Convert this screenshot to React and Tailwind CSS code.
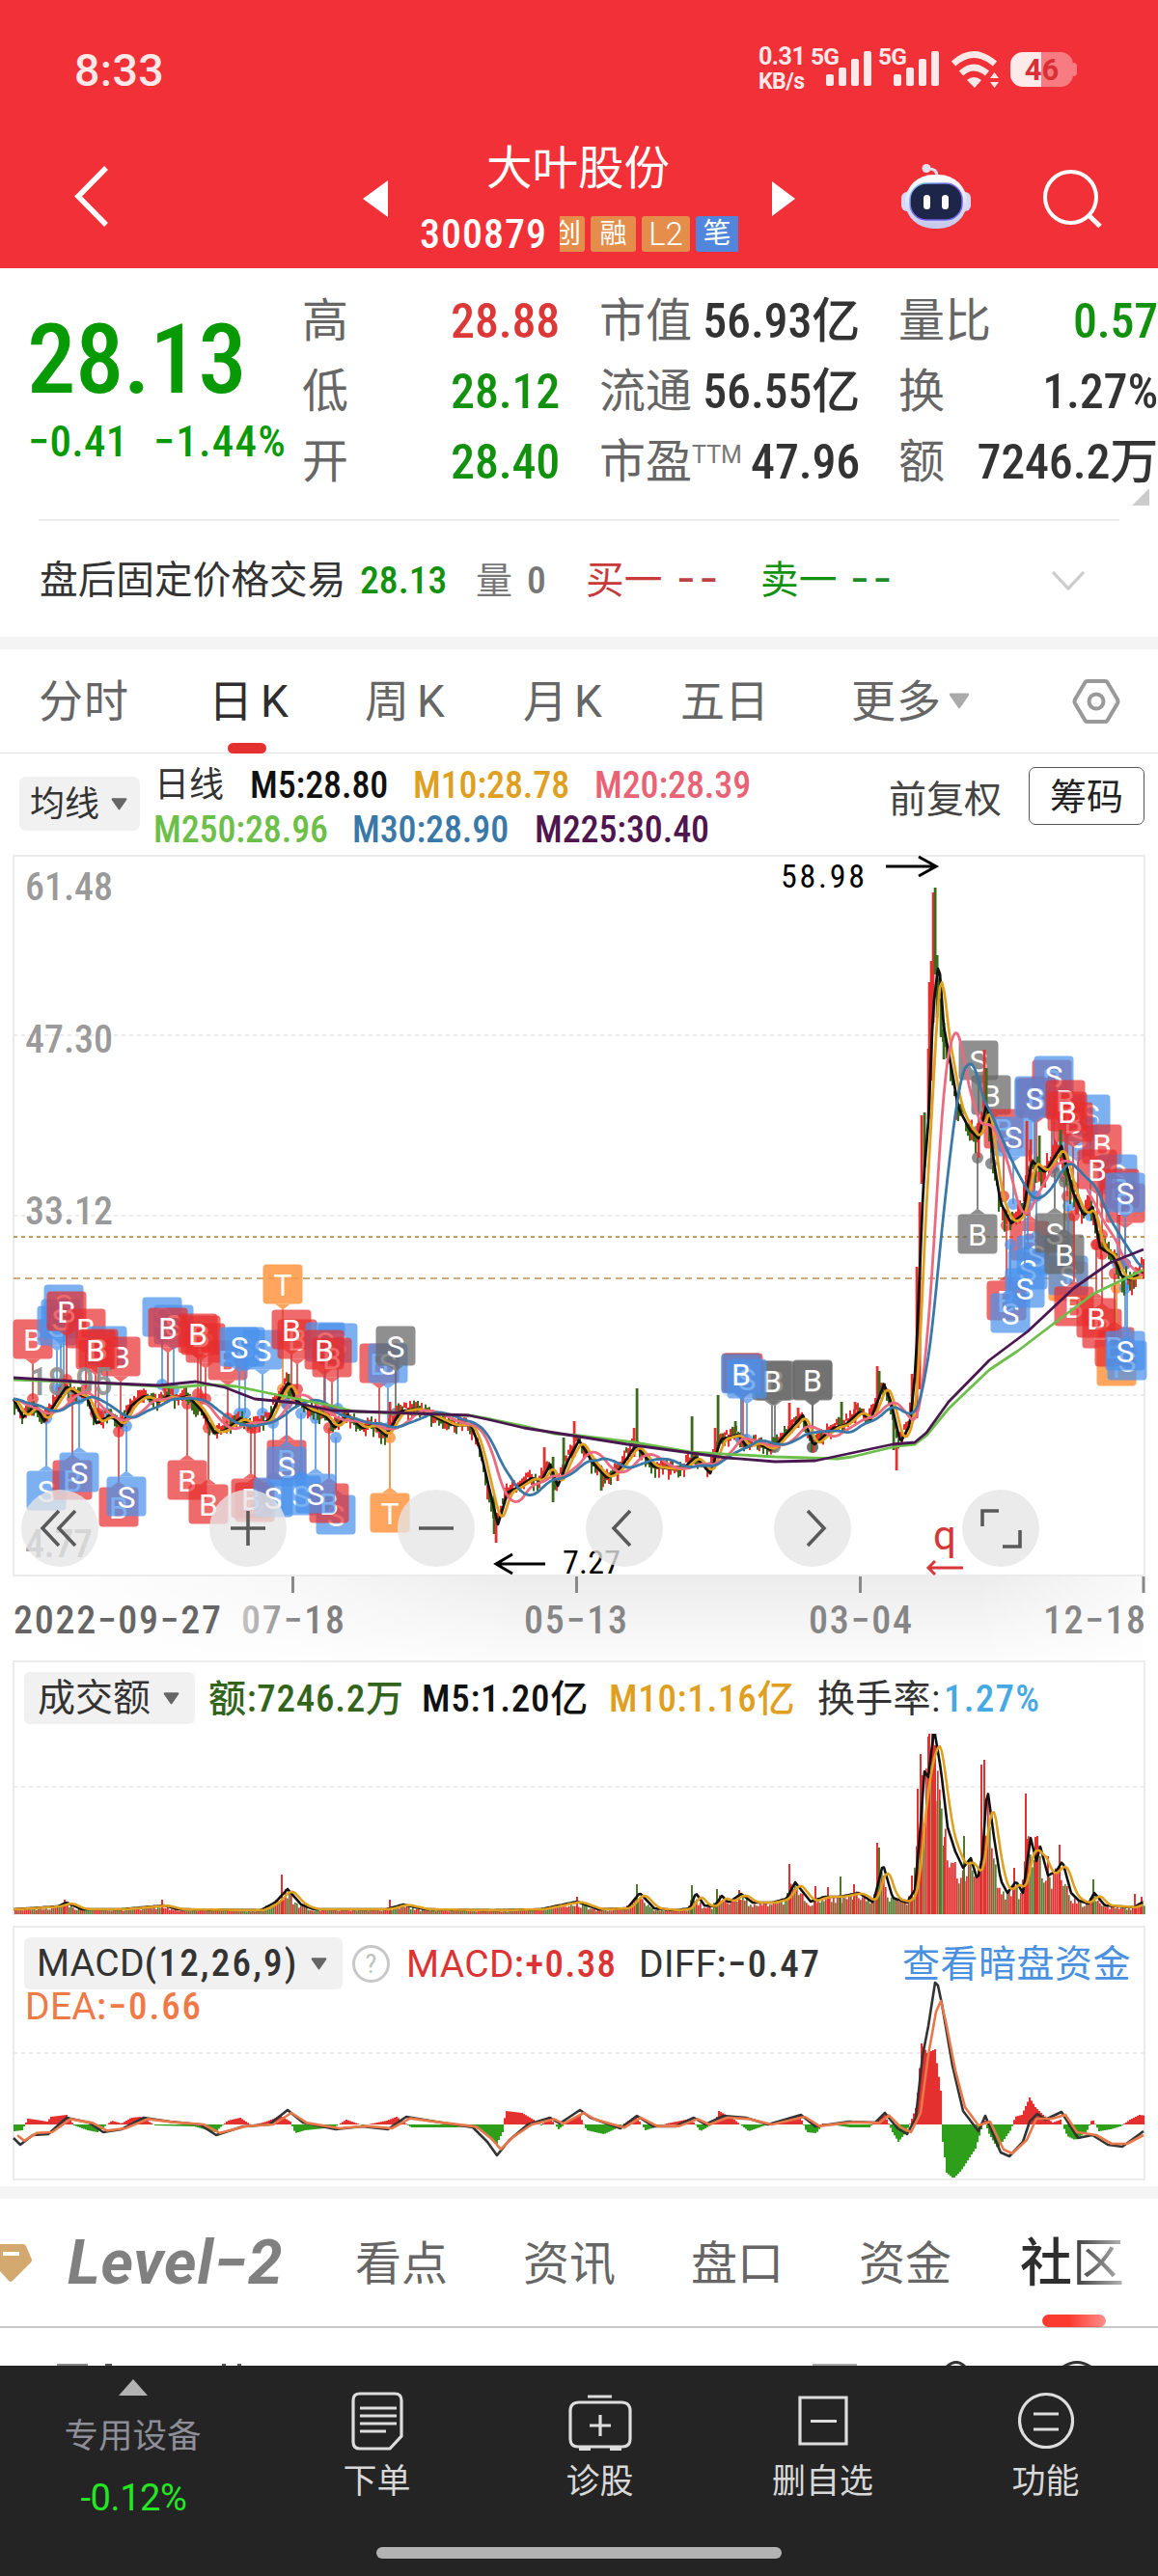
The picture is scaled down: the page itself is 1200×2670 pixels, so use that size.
import React from 'react';

const RED = '#e53030';
const GREEN = '#2f9e1b';

// deterministic noise so the chart is the same on every render
const noise = (i) => {
  const s = Math.sin(i * 127.1 + 11.7) * 43758.5453;
  return s - Math.floor(s);
};

const at = (pts, x) => {
  if (x <= pts[0][0]) return pts[0][1];
  for (let i = 1; i < pts.length; i++) {
    if (x <= pts[i][0]) {
      const [x0, y0] = pts[i - 1];
      const [x1, y1] = pts[i];
      return y0 + ((y1 - y0) * (x - x0)) / (x1 - x0);
    }
  }
  return pts[pts.length - 1][1];
};

const avg = (pts, x, win) => {
  let sum = 0;
  let n = 0;
  for (let d = 0; d <= win; d += 1.5) {
    sum += at(pts, x - d);
    n++;
  }
  return sum / n;
};

const trail = (pts, win) => {
  const out = [];
  for (let x = 14; x <= 1185; x += 2) out.push(x + ',' + avg(pts, x, win).toFixed(1));
  return out.join(' ');
};

const line = (pts) => pts.map((p) => p.join(',')).join(' ');

const price = [
  [14, 1450], [24, 1469], [36, 1457], [46, 1473], [57, 1455], [69, 1437], [80, 1445], [90, 1448], [100, 1475], [115, 1467],
  [126, 1478], [136, 1457], [149, 1447], [165, 1453], [174, 1447], [184, 1450], [195, 1447], [209, 1462], [222, 1485], [233, 1483],
  [249, 1470], [264, 1478], [279, 1472], [287, 1453], [299, 1432], [306, 1450], [318, 1460], [337, 1467], [347, 1480], [360, 1467],
  [375, 1480], [387, 1477], [400, 1488], [406, 1478], [415, 1463], [432, 1460], [448, 1467], [469, 1477], [488, 1477], [497, 1500],
  [507, 1543], [516, 1580], [526, 1547], [536, 1542], [551, 1532], [561, 1535], [570, 1518], [578, 1540], [589, 1513], [600, 1493],
  [615, 1517], [629, 1532], [642, 1523], [659, 1498], [677, 1520], [692, 1522], [707, 1523], [721, 1510], [736, 1527], [747, 1492],
  [765, 1487], [774, 1500], [784, 1495], [799, 1503], [814, 1487], [832, 1467], [843, 1498], [864, 1480], [876, 1477], [891, 1463],
  [902, 1472], [916, 1435], [923, 1452], [933, 1495], [943, 1477], [949, 1416], [957, 1224], [962, 1163], [967, 1045], [973, 996],
  [978, 1064], [987, 1113], [993, 1148], [1005, 1171], [1014, 1180], [1023, 1142], [1030, 1205], [1037, 1247], [1048, 1268], [1060, 1259],
  [1069, 1203], [1083, 1215], [1100, 1188], [1112, 1236], [1123, 1260], [1132, 1251], [1140, 1293], [1153, 1301], [1163, 1324], [1173, 1326], [1185, 1318],
];

const m225 = [
  [14, 1428], [96, 1433], [165, 1436], [203, 1432], [233, 1438], [264, 1450], [306, 1454], [344, 1462], [402, 1464], [486, 1467],
  [509, 1472], [543, 1480], [600, 1489], [650, 1497], [753, 1511], [803, 1515], [845, 1514], [925, 1497], [948, 1495], [960, 1485],
  [983, 1453], [1025, 1410], [1065, 1380], [1113, 1335], [1150, 1309], [1185, 1295],
];

const m250 = [
  [14, 1430], [96, 1433], [165, 1437], [184, 1438], [214, 1435], [245, 1437], [298, 1448], [344, 1457], [367, 1463], [486, 1467],
  [509, 1471], [543, 1478], [574, 1486], [600, 1488], [657, 1495], [715, 1505], [803, 1510], [868, 1512], [883, 1510], [929, 1499],
  [948, 1497], [960, 1488], [983, 1460], [1025, 1420], [1055, 1400], [1097, 1368], [1133, 1341], [1185, 1316],
];

// single long candles: x, top, bottom, colour
const wicks = [
  [564, 1500, 1530, RED], [573, 1510, 1557, '#3b6a1c'], [584, 1490, 1530, '#3b6a1c'], [595, 1473, 1510, RED], [660, 1439, 1500, '#3b6a1c'],
  [657, 1480, 1510, RED], [717, 1468, 1515, '#3b6a1c'], [744, 1446, 1500, '#3b6a1c'], [741, 1480, 1520, RED], [762, 1473, 1490, '#3b6a1c'],
  [818, 1454, 1485, RED], [827, 1459, 1480, RED], [872, 1453, 1480, '#3b6a1c'], [886, 1453, 1475, RED], [909, 1416, 1465, RED],
  [911, 1421, 1450, '#3b6a1c'], [926, 1472, 1503, '#3b6a1c'], [929, 1495, 1524, RED], [945, 1424, 1470, RED], [953, 1246, 1440, RED],
  [950, 1313, 1470, RED], [955, 1156, 1227, RED], [958, 1153, 1210, '#3b6a1c'], [962, 1087, 1160, RED], [963, 1018, 1150, RED],
  [965, 996, 1120, RED], [967, 925, 1060, RED], [969, 920, 1010, '#3b6a1c'], [971, 990, 1055, '#3b6a1c'], [975, 1035, 1075, '#3b6a1c'],
  [978, 1060, 1098, '#3b6a1c'], [1020, 1088, 1160, RED], [1022, 1107, 1150, '#3b6a1c'], [1014, 1170, 1200, RED], [1064, 1162, 1260, RED],
  [1077, 1177, 1215, '#3b6a1c'], [1099, 1171, 1200, '#3b6a1c'], [1068, 1181, 1230, RED], [512, 1550, 1590, '#3b6a1c'], [514, 1570, 1599, RED],
  [623, 1520, 1545, '#3b6a1c'], [640, 1515, 1535, RED], [299, 1424, 1450, '#3b6a1c'], [404, 1453, 1485, RED],
];

const volume = [
  [14, 5], [60, 8], [69, 12], [85, 5], [125, 5], [170, 9], [185, 5], [270, 4], [285, 12], [298, 26], [312, 10], [325, 5], [400, 5],
  [418, 10], [440, 5], [510, 4], [560, 5], [598, 13], [620, 5], [650, 6], [663, 22], [678, 6], [700, 4], [715, 6], [721, 22], [730, 9],
  [740, 8], [748, 19], [755, 12], [768, 21], [780, 12], [800, 12], [815, 16], [824, 33], [840, 13], [855, 18], [870, 18], [890, 22],
  [905, 12], [915, 52], [925, 17], [940, 12], [948, 25], [953, 80], [958, 148], [962, 142], [968, 192], [975, 150], [982, 90], [990, 65],
  [998, 48], [1006, 58], [1013, 35], [1018, 60], [1023, 132], [1030, 80], [1037, 35], [1044, 22], [1053, 34], [1060, 22], [1068, 79],
  [1074, 55], [1078, 70], [1086, 40], [1095, 45], [1101, 55], [1110, 22], [1118, 14], [1128, 11], [1134, 22], [1145, 9], [1160, 8], [1175, 7], [1185, 13],
].map(([x, h]) => [x, 1984 - h]);

const volumeSpikes = [
  [292, 41], [67, 15], [168, 15], [404, 15], [598, 18], [660, 31, 1], [717, 30, 1], [743, 26, 1], [766, 25], [818, 52], [845, 29], [858, 28],
  [871, 39, 1], [885, 31], [909, 74], [911, 69, 1], [945, 40], [951, 130], [954, 166], [962, 184], [963, 190], [967, 193], [969, 175],
  [974, 118, 1], [979, 80], [999, 81, 1], [1017, 155], [1020, 160], [1063, 125], [1065, 78], [1073, 80], [1075, 81], [1086, 60], [1098, 72], [1051, 48],
  [1133, 36, 1], [1176, 21], [1183, 18],
];

const diff = [
  [14, 2216], [21, 2223], [34, 2213], [50, 2212], [69, 2195], [92, 2200], [107, 2210], [126, 2207], [149, 2195], [176, 2199],
  [207, 2202], [224, 2213], [252, 2204], [279, 2202], [298, 2187], [314, 2200], [348, 2207], [375, 2204], [402, 2207], [421, 2194],
  [451, 2199], [490, 2205], [505, 2220], [515, 2234], [528, 2218], [547, 2202], [570, 2195], [580, 2201], [601, 2187], [612, 2195],
  [643, 2206], [660, 2193], [677, 2204], [700, 2204], [719, 2195], [731, 2202], [750, 2193], [773, 2195], [796, 2202], [830, 2192],
  [845, 2204], [880, 2199], [907, 2200], [917, 2190], [930, 2206], [940, 2212], [949, 2195], [956, 2131], [962, 2100], [969, 2055], [972, 2058], [976, 2077],
  [987, 2141], [998, 2188], [1014, 2209], [1021, 2193], [1037, 2231], [1046, 2235], [1060, 2220], [1067, 2199], [1075, 2191], [1083, 2197],
  [1100, 2189], [1117, 2216], [1132, 2213], [1148, 2223], [1163, 2225], [1185, 2209],
];

const dea = [
  ...diff.filter((p) => p[0] < 945).map(([x, y]) => [x + 4, y + (2202 - y) * 0.2]),
  [954, 2190], [962, 2130], [970, 2085], [975, 2074], [980, 2095], [990, 2146], [1000, 2184], [1014, 2203], [1026, 2199], [1040, 2228],
  [1049, 2232], [1064, 2218], [1074, 2196], [1090, 2196], [1104, 2192], [1116, 2210], [1136, 2213], [1152, 2222], [1168, 2222], [1185, 2213],
];

const hist = [
  [14, -7], [22, -6], [28, 6], [36, 5], [48, 3], [52, 8], [68, 10], [76, -1], [90, -6], [100, -8], [115, 4], [125, 1], [135, 7], [145, 8],
  [160, -1], [200, -2], [222, -8], [235, 4], [248, 7], [260, -1], [275, 3], [290, 9], [300, 3], [305, -9], [315, -6], [345, -3], [358, 5],
  [375, -1], [400, 4], [410, 8], [425, -3], [470, -3], [490, -2], [505, -12], [514, -20], [520, -8], [523, 14], [540, 12], [552, 5], [560, -1],
  [568, 8], [578, -5], [590, 5], [600, 9], [607, -6], [625, -10], [640, -3], [658, 9], [668, -6], [690, 1], [715, 6], [725, -7], [740, 2],
  [744, 14], [760, 5], [775, -7], [800, 2], [828, 9], [835, -8], [845, -9], [852, 1], [880, -3], [900, -3], [915, 12], [924, -8], [930, -18],
  [938, -8], [943, 3], [949, 20], [954, 84], [960, 74], [964, 76], [968, 78], [974, 35], [975, -10], [980, -50], [987, -56], [995, -48],
  [1010, -25], [1016, -5], [1019, 8], [1023, -8], [1033, -25], [1047, -5], [1051, 8], [1058, 10], [1066, 28], [1072, 18], [1080, 10],
  [1090, 2], [1098, 5], [1105, -12], [1113, -16], [1125, -8], [1131, 6], [1138, -7], [1150, -5], [1160, -2], [1170, 5], [1180, 10], [1186, 9],
];

const tagColor = { r: 'rgba(232,44,44,.7)', b: 'rgba(74,146,236,.72)', g: 'rgba(104,104,104,.74)', o: 'rgba(255,150,66,.86)' };
const stemColor = { r: '#d23b3b', b: '#4a8fdd', g: '#666', o: '#e08a34' };

// letter, colour, centre x, centre y, y of the candle it belongs to
const tags = [
  ['B', 'r', 34, 1388, 1450], ['S', 'b', 59, 1374, 1440], ['S', 'b', 66, 1352, 1440], ['S', 'b', 63, 1367, 1440], ['B', 'r', 69, 1359, 1430],
  ['B', 'r', 89, 1377, 1440], ['S', 'b', 111, 1395, 1465], ['B', 'r', 125, 1406, 1475], ['B', 'r', 102, 1398, 1465], ['B', 'r', 99, 1399, 1465],
  ['S', 'b', 168, 1365, 1435], ['S', 'b', 180, 1373, 1440], ['B', 'r', 174, 1376, 1440],
  ['B', 'r', 213, 1392, 1450], ['B', 'r', 208, 1384, 1450], ['B', 'r', 205, 1382, 1445], ['B', 'r', 236, 1410, 1470], ['S', 'b', 254, 1396, 1465],
  ['S', 'b', 272, 1399, 1465], ['S', 'b', 248, 1396, 1465],
  ['T', 'o', 293, 1331, 1440], ['B', 'r', 308, 1388, 1440], ['B', 'r', 302, 1378, 1440],
  ['S', 'b', 350, 1392, 1460], ['S', 'b', 337, 1391, 1460], ['B', 'r', 344, 1407, 1462], ['B', 'r', 336, 1399, 1462],
  ['B', 'r', 393, 1413, 1480], ['S', 'b', 402, 1413, 1480], ['S', 'g', 410, 1395, 1465],
  ['B', 'g', 803, 1431, 1500], ['B', 'g', 800, 1431, 1500],
  ['B', 'g', 768, 1423, 1492], ['B', 'r', 770, 1423, 1492], ['S', 'b', 774, 1429, 1492], ['B', 'b', 768, 1424, 1492],
  ['B', 'g', 842, 1431, 1500], ['B', 'g', 842, 1430, 1500],
  ['S', 'b', 48, 1545, 1470], ['B', 'r', 75, 1534, 1450], ['S', 'b', 82, 1526, 1450], ['B', 'r', 123, 1562, 1484], ['S', 'b', 131, 1551, 1478],
  ['B', 'r', 194, 1534, 1455], ['B', 'r', 216, 1559, 1480], ['B', 'r', 264, 1557, 1480], ['B', 'r', 260, 1553, 1480], ['S', 'b', 283, 1552, 1475],
  ['B', 'r', 297, 1513, 1455], ['S', 'b', 297, 1520, 1455], ['S', 'b', 312, 1550, 1465], ['S', 'b', 348, 1570, 1490], ['B', 'r', 341, 1558, 1480], ['S', 'b', 327, 1548, 1470],
  ['T', 'o', 404, 1568, 1490],
  ['S', 'g', 1014, 1099, 1172], ['B', 'g', 1027, 1135, 1206], ['B', 'g', 1013, 1279, 1200],
];

const lateTags = [
  ['B', 'r', 1040, 1170, 1240], ['S', 'b', 1050, 1178, 1248], ['S', 'b', 1072, 1136, 1240], ['B', 'r', 1090, 1119, 1210], ['S', 'b', 1092, 1115, 1210],
  ['B', 'r', 1074, 1138, 1220], ['S', 'b', 1072, 1138, 1240],
  ['S', 'b', 1130, 1155, 1260], ['S', 'b', 1117, 1178, 1250], ['B', 'r', 1142, 1186, 1280], ['B', 'r', 1112, 1163, 1230], ['B', 'r', 1104, 1140, 1220],
  ['B', 'r', 1106, 1152, 1240], ['S', 'b', 1158, 1217, 1310], ['B', 'r', 1160, 1232, 1310], ['B', 'r', 1137, 1212, 1290], ['B', 'r', 1166, 1247, 1310], ['S', 'b', 1166, 1236, 1310],
  ['B', 'r', 1067, 1286, 1230], ['B', 'r', 1043, 1348, 1270], ['S', 'b', 1047, 1361, 1290], ['S', 'b', 1074, 1301, 1240], ['S', 'b', 1065, 1316, 1250],
  ['S', 'b', 1062, 1335, 1255], ['T', 'o', 1107, 1328, 1260], ['S', 'g', 1093, 1278, 1215], ['S', 'b', 1107, 1322, 1250], ['B', 'g', 1103, 1300, 1225],
  ['B', 'r', 1113, 1354, 1260], ['B', 'r', 1142, 1377, 1300], ['B', 'r', 1136, 1366, 1290], ['T', 'o', 1157, 1416, 1335], ['B', 'r', 1155, 1396, 1320],
  ['S', 'b', 1168, 1410, 1330], ['S', 'b', 1166, 1400, 1335],
];

function Tag({ t }) {
  const [letter, c, x, y, ty] = t;
  const down = ty > y;
  const s = down ? 1 : -1;
  return (
    <g>
      <line x1={x} y1={y + s * 26} x2={x} y2={ty} stroke={stemColor[c]} strokeWidth="1.6" />
      <circle cx={x} cy={ty} r="6" fill={tagColor[c]} />
      <path d={`M${x - 8} ${y + s * 20.5}h16l-8 ${s * 6}z`} fill={tagColor[c]} />
      <rect x={x - 20.5} y={y - 20.5} width="41" height="41" rx="4" fill={tagColor[c]} />
      <text x={x} y={y + 11.5} fontSize="32" fill="#fff" textAnchor="middle" className="font-['Roboto']">{letter}</text>
    </g>
  );
}

function Candles() {
  const bars = [];
  for (let x = 14, i = 0; x < 1186; x += 2, i++) {
    const c = at(price, x + 3);
    const up = at(price, x + 4) <= at(price, x + 1);
    const red = noise(i) < (up ? 0.8 : 0.35);
    const amp = x > 975 ? 14 : 8;
    const top = c - 2 - noise(i + 900) * amp;
    const h = 5 + noise(i + 300) * amp * 1.3;
    if (x > 943 && x < 972) continue;
    bars.push(<rect key={x} x={x} y={top} width="2" height={h} fill={red ? RED : '#3b6a1c'} />);
  }
  return (
    <g>
      {bars}
      {wicks.map((w, i) => (
        <rect key={i} x={w[0] - 1.3} y={w[1]} width="2.8" height={w[2] - w[1]} fill={w[3]} />
      ))}
    </g>
  );
}

const controls = [
  [62, 'M61 1566l-17 18 17 18M78 1566l-17 18 17 18'],
  [257, 'M257 1566v36M239 1584h36'],
  [452, 'M434 1584h36'],
  [647, 'M653 1566l-17 18 17 18'],
  [842, 'M837 1566l17 18-17 18'],
  [1037, 'M1018 1582v-16h17M1057 1586v17h-18'],
];

function PriceChart() {
  return (
    <svg className="block h-[837px] w-full" viewBox="0 884 1200 837">
      <defs>
        <linearGradient id="axis" x1="0" x2="0" y1="0" y2="1">
          <stop offset="0" stopColor="#ececec" />
          <stop offset="1" stopColor="#fcfcfc" />
        </linearGradient>
        <linearGradient id="axisFade" x1="0" x2="1" y1="0" y2="0">
          <stop offset="0" stopColor="#fff" />
          <stop offset=".25" stopColor="#fff" stopOpacity=".6" />
          <stop offset=".45" stopColor="#fff" stopOpacity="0" />
          <stop offset=".85" stopColor="#fff" stopOpacity="0" />
          <stop offset="1" stopColor="#fff" stopOpacity=".7" />
        </linearGradient>
        <linearGradient id="dateFade" x1="0" x2="1" y1="0" y2="0">
          <stop offset="0" stopColor="#c4c4c4" />
          <stop offset=".6" stopColor="#808080" />
        </linearGradient>
      </defs>
      <rect x="14" y="1634" width="1172" height="87" fill="url(#axis)" />
      <rect x="14" y="1634" width="1172" height="87" fill="url(#axisFade)" />
      <rect x="14" y="887" width="1172" height="746" fill="none" stroke="#ebebeb" strokeWidth="2" />
      <path d="M14 1073H1186M14 1260H1186M14 1446H1186" stroke="#ebebeb" strokeWidth="2" strokeDasharray="4 4" />
      <path d="M14 1282H1186" stroke="#c09a5c" strokeWidth="2" strokeDasharray="4 4" />
      <path d="M14 1325H1186" stroke="#c8ac7c" strokeWidth="2" strokeDasharray="7 5" />

      {tags.map((t, i) => <Tag key={i} t={t} />)}
      {lateTags.map((t, i) => <Tag key={i} t={t} />)}
      <Candles />
      <g fontSize="40" fill="#8c8c8c" fillOpacity=".9" className="font-medium">
        <text x="26" y="933" textLength="91">61.48</text>
        <text x="26" y="1091" textLength="91">47.30</text>
        <text x="26" y="1269" textLength="91">33.12</text>
        <text x="30" y="1446" textLength="87">18.95</text>
        <text x="26" y="1614" textLength="70">4.77</text>
      </g>
      <g fill="none" strokeWidth="2.8" strokeLinejoin="round">
        <polyline points={trail(price, 1)} stroke="#111" />
        <polyline points={trail(price, 8)} stroke="#e0a020" />
        <polyline points={trail(price, 28)} stroke="#ec6a80" />
        <polyline points={trail(price, 44)} stroke="#3a78a8" />
        <polyline points={line(m250)} stroke="#6cc04a" />
        <polyline points={line(m225)} stroke="#4a1850" />
      </g>

      <text x="809" y="920" fontSize="34" textLength="87">58.98</text>
      <path d="M918 898h50M952 888l18 10-18 10" fill="none" stroke="#000" strokeWidth="3" />
      <path d="M565 1621h-50M531 1611l-17 10 17 10" fill="none" stroke="#000" strokeWidth="3" />
      <text x="583" y="1631" fontSize="34" textLength="60">7.27</text>
      <text x="967" y="1606" fontSize="42" fill="#d63838" className="font-['Roboto']">q</text>
      <path d="M998 1625h-34M969 1618l-7 7 7 7" fill="none" stroke="#d63838" strokeWidth="3" />

      {controls.map(([cx, d]) => (
        <g key={cx}>
          <circle cx={cx} cy="1584" r="40" fill="#e6e6e6" fillOpacity=".78" />
          <path d={d} fill="none" stroke="#5a5a5a" strokeWidth="3.6" />
        </g>
      ))}

      <path d="M303.5 1634v17M597.500 1634v17M891.5 1634v17M1185 1634v17" stroke="#888" strokeWidth="3" />
      <g fontSize="40" fill="#868686" className="font-medium">
        <text x="14" y="1693" fill="#666" textLength="215">2022−09−27</text>
        <text x="250" y="1693" fill="url(#dateFade)" textLength="107">07−18</text>
        <text x="543" y="1693" textLength="107">05−13</text>
        <text x="838" y="1693" textLength="107">03−04</text>
        <text x="1081" y="1693" textLength="106">12−18</text>
      </g>
    </svg>
  );
}

function VolumeChart() {
  const bars = [];
  for (let x = 15, i = 0; x < 1186; x += 2, i++) {
    const h = (1984 - at(volume, x + 3)) * (0.6 + noise(i + 50) * 0.5);
    bars.push(<rect key={x} x={x} y={1984 - h} width="1.7" height={h} fill={noise(i + 7) > 0.42 ? RED : '#5a7f36'} />);
  }
  return (
    <svg className="block h-[188px] w-full" viewBox="0 1797 1200 188">
      <path d="M14 1852H1186" stroke="#ebebeb" strokeWidth="2" strokeDasharray="4 4" />
      <path d="M14 1797V1984H1186V1797" fill="none" stroke="#ebebeb" strokeWidth="2" />
      {bars}
      {volumeSpikes.map(([x, h, g]) => (
        <rect key={x} x={x - 1} y={1984 - h} width="2" height={h} fill={g ? '#4c7a2a' : RED} />
      ))}
      <g fill="none" strokeWidth="2.6" strokeLinejoin="round">
        <polyline points={trail(volume, 1)} stroke="#111" />
        <polyline points={trail(volume, 9)} stroke="#e0a020" />
      </g>
    </svg>
  );
}

function MacdChart() {
  const bars = [];
  for (let x = 14; x < 1186; x += 2) {
    const h = at(hist, x);
    bars.push(<rect key={x} x={x} y={h > 0 ? 2202 - h : 2202} width="2.1" height={Math.abs(h)} fill={h > 0 ? RED : GREEN} />);
  }
  return (
    <svg className="-mt-[46px] block h-[212px] w-full" viewBox="0 2048 1200 212">
      <path d="M14 2128H1186" stroke="#ebebeb" strokeWidth="2" strokeDasharray="4 4" />
      <path d="M14 2048V2259H1186V2048" fill="none" stroke="#ebebeb" strokeWidth="2" />
      {bars}
      <g fill="none" strokeWidth="2.6" strokeLinejoin="round">
        <polyline points={line(diff)} stroke="#333" />
        <polyline points={line(dea)} stroke="#e8784a" />
      </g>
    </svg>
  );
}

function Down({ className }) {
  return (
    <svg className={className} viewBox="0 0 18 13">
      <path d="M2 0h14q2 0 1 2L10 12q-1 1.500-2 0L1 2Q0 0 2 0z" fill="currentColor" />
    </svg>
  );
}

// capitals are set wider than the figures beside them
function Wide({ children }) {
  return <span className="font-['Roboto'] font-normal tracking-[0.3px]">{children}</span>;
}

function Signal({ className }) {
  return (
    <div className={'flex h-[44px] w-[63px] items-start text-[#ffe8e8] ' + className}>
      <span className="w-0 overflow-visible whitespace-nowrap text-[24.5px] leading-[25px] font-bold font-['Roboto'] tracking-[-0.8px]">5G</span>
      <svg className="ml-[16px] h-[44px] w-[47px] shrink-0" viewBox="0 0 47 44" fill="#ffe8e8">
        <rect y="31" width="8" height="12" rx="2" />
        <rect x="13" y="24" width="8" height="19" rx="2" />
        <rect x="26" y="15" width="8" height="28" rx="2" />
        <rect x="39" y="7" width="8" height="36" rx="2" />
      </svg>
    </div>
  );
}

function StatusBar() {
  return (
    <div className="flex h-[142px] items-start pt-[46px] text-[#ffe8e8]">
      <span className="ml-[77px] w-[92px] text-[46.5px] leading-[54px] font-medium font-['Roboto'] tracking-[0.4px]">8:33</span>
      <div className="ml-[617px] w-[54px] whitespace-nowrap text-[25px] leading-[26px] font-bold font-['Roboto'] tracking-[-0.5px]">
        <div>0.31</div>
        <div className="text-[23px]">KB/s</div>
      </div>
      <Signal className="" />
      <Signal className="ml-[7px]" />
      <svg className="mt-[6px] ml-[12px] h-[42px] w-[52px] shrink-0" viewBox="0 0 52 42">
        <g fill="none" stroke="#ffe8e8" strokeWidth="6.500">
          <path d="M3 14Q24-5 46 14" />
          <path d="M11 24Q24 12 38 24" />
        </g>
        <path d="M17 31q7-6 15 0l-7 8z" fill="#ffe8e8" />
        <path d="M41 29l4.500-6 4.500 6zM41 33h9l-4.500 6z" fill="#ffe8e8" />
      </svg>
      <div className="ml-[10px] mt-[8px] flex h-[36px] w-[70px] items-center">
        <div className="flex h-[36px] w-[65px] items-center justify-center rounded-[13px] bg-[linear-gradient(90deg,#ffeaea_50%,#f87b81_50%)] text-[31px] leading-none font-bold text-[#d92f36] font-['Roboto']">46</div>
        <div className="h-[14px] w-[4px] rounded-r-full bg-[#f87b81]" />
      </div>
    </div>
  );
}

function Header() {
  return (
    <header className="h-[278px] bg-[#f23038]">
      <StatusBar />
      <div className="flex h-[136px] text-white">
        <svg className="ml-[77px] mt-[30px] h-[64px] w-[36px]" viewBox="0 0 36 64">
          <path d="M33 2L4 31.500 33 61" fill="none" stroke="#fff" strokeWidth="5.500" />
        </svg>
        <svg className="ml-[263px] mt-[45px] h-[38px] w-[26px]" viewBox="0 0 26 38"><path d="M26 0v38L0 19z" fill="#fff" /></svg>
        <div className="ml-[33px] w-[331px]">
          <div className="mt-[8px] ml-[69px] h-[50px] whitespace-nowrap text-[47.5px] leading-[50px]">大叶股份</div>
          <div className="mt-[24px] flex h-[37px] items-center">
            <span className="w-[145px] text-[42px] leading-none font-medium tracking-[1px]">300879</span>
            <span className="flex h-[37px] w-[26px] items-center justify-end overflow-hidden rounded-r-[3px] bg-[#e58e4c] text-[28px] leading-none"><span className="mr-[4px]">创</span></span>
            <span className="ml-[6px] flex h-[37px] w-[47px] items-center justify-center rounded-[3px] bg-[#e58e4c] text-[28px] leading-none">融</span>
            <span className="ml-[6px] flex h-[37px] w-[50px] items-center justify-center rounded-[3px] bg-[#e58e4c] text-[33px] leading-none font-['Roboto'] font-light">L2</span>
            <span className="ml-[6px] flex h-[37px] w-[44px] items-center justify-center rounded-l-[3px] bg-[#5186dc] text-[29px] leading-none">笔</span>
          </div>
        </div>
        <svg className="ml-[34px] mt-[46px] h-[36px] w-[24px]" viewBox="0 0 24 36"><path d="M0 0v36l24-18z" fill="#fff" /></svg>
        <svg className="ml-[109px] mt-[28px] h-[68px] w-[74px]" viewBox="0 0 74 68">
          <defs>
            <linearGradient id="head" x1="0" x2="0" y1="0" y2="1">
              <stop offset="0" stopColor="#fff" />
              <stop offset="1" stopColor="#c4c6ec" />
            </linearGradient>
            <linearGradient id="rim" x1="0" x2="1" y1="0" y2="1">
              <stop offset="0" stopColor="#7fd4ea" />
              <stop offset=".5" stopColor="#7a5cf0" />
              <stop offset="1" stopColor="#6a6af0" />
            </linearGradient>
          </defs>
          <path d="M28 5q10-1 10 8" fill="none" stroke="#e4def0" strokeWidth="3" />
          <circle cx="27" cy="4.500" r="4.500" fill="#e4e0f2" />
          <rect x="1" y="29" width="14" height="20" rx="6" fill="#d8d8f4" />
          <rect x="59" y="29" width="14" height="20" rx="6" fill="#d8d8f4" />
          <rect x="5" y="11" width="64" height="56" rx="29" fill="url(#head)" />
          <rect x="10" y="20" width="54" height="38" rx="17" fill="#1d2549" stroke="url(#rim)" strokeWidth="1.500" />
          <rect x="24" y="32" width="7" height="15" rx="3.500" fill="#fff" />
          <rect x="43" y="32" width="7" height="15" rx="3.500" fill="#fff" />
        </svg>
        <svg className="ml-[73px] mt-[33px] h-[62px] w-[62px]" viewBox="0 0 62 62" fill="none" stroke="#fff" strokeWidth="4">
          <circle cx="29.500" cy="29.500" r="26.500" />
          <path d="M48 48l12 11.500" strokeWidth="5" />
        </svg>
      </div>
    </header>
  );
}

function Quote({ label, sup, value, color }) {
  return (
    <div className="flex h-[73px] items-center whitespace-nowrap pt-[2px]">
      <span className="text-[48px] leading-none text-[#666]">{label}</span>
      {sup && <span className="mb-[14px] text-[25px] leading-none text-[#777] font-['Roboto']">{sup}</span>}
      <span className={'ml-auto text-[50px] leading-none font-medium tracking-[-0.2px] ' + color}>{value}</span>
    </div>
  );
}

function Summary() {
  return (
    <section>
      <div className="flex h-[262px] border-b-2 border-[#ededed] bg-white [border-image:linear-gradient(90deg,transparent_3.4%,#ededed_3.4%,#ededed_96.6%,transparent_96.6%)_1]">
        <div className="ml-[28px] w-[285px] whitespace-nowrap text-[#079a04]">
          <div className="mt-[45px] text-[101px] leading-[100px] font-medium tracking-[-0.6px]">28.13</div>
          <div className="mt-[10px] ml-px flex text-[45px] leading-[50px] font-medium">
            <span className="w-[130px] tracking-[0.3px]">−0.41</span>
            <span className="tracking-[1.2px]">−1.44%</span>
          </div>
        </div>
        <div className="mt-[17px] w-[267px]">
          <Quote label="高" value="28.88" color="text-[#dc3838]" />
          <Quote label="低" value="28.12" color="text-[#12910f]" />
          <Quote label="开" value="28.40" color="text-[#12910f]" />
        </div>
        <div className="ml-[41px] mt-[17px] w-[270px]">
          <Quote label="市值" value="56.93亿" color="text-[#333]" />
          <Quote label="流通" value="56.55亿" color="text-[#333]" />
          <Quote label="市盈" sup="TTM" value="47.96" color="text-[#333]" />
        </div>
        <div className="ml-[40px] mt-[17px] w-[269px]">
          <Quote label="量比" value="0.57" color="text-[#12910f]" />
          <Quote label="换" value="1.27%" color="text-[#333]" />
          <Quote label="额" value="7246.2万" color="text-[#333]" />
          <svg className="-mt-[8px] ml-[242px] h-[18px] w-[18px]" viewBox="0 0 18 18"><path d="M18 0v18H0z" fill="#ccc" /></svg>
        </div>
      </div>
      <div className="flex h-[120px] items-center whitespace-nowrap pt-[3px] text-[39.7px] leading-none">
        <span className="ml-[41px] w-[332px] text-[#333]">盘后固定价格交易</span>
        <span className="w-[120px] font-medium text-[#12910f]">28.13</span>
        <span className="w-[53px] text-[38px] text-[#777]">量</span>
        <span className="w-[61px] font-medium text-[#777]">0</span>
        <span className="w-[94px] text-[#c83a3a]">买一</span>
        <span className="w-[87px] font-medium tracking-[4px] text-[#b84444]">−−</span>
        <span className="w-[93px] text-[#12910f]">卖一</span>
        <span className="font-medium tracking-[4px] text-[#1f8a28]">−−</span>
        <svg className="ml-auto mr-[76px] h-[20px] w-[34px]" viewBox="0 0 34 20"><path d="M1 1l16 17L33 1" fill="none" stroke="#ccc" strokeWidth="3.200" /></svg>
      </div>
      <div className="h-[13px] bg-[#f4f4f4]" />
    </section>
  );
}

function PeriodTabs() {
  return (
    <nav className="flex h-[108px] border-b border-[#e2e2e2] whitespace-nowrap text-[46px] leading-[108px] text-[#666]">
      <span className="ml-[40px] w-[176px] tracking-[1px]">分时</span>
      <div className="w-[162px] text-[#2e2e2e]">
        <div className="h-[97px]">日<span className="ml-[8px] font-['Roboto']">K</span></div>
        <div className="ml-[20px] h-[11px] w-[40px] rounded-full bg-[#e53030]" />
      </div>
      <span className="w-[164px]">周<span className="ml-[8px] font-['Roboto']">K</span></span>
      <span className="w-[163px]">月<span className="ml-[7px] font-['Roboto']">K</span></span>
      <span className="w-[177px]">五日</span>
      <span className="w-[101px] tracking-[1px]">更多</span>
      <Down className="mt-[44px] h-[19px] w-[22px] text-[#aaa]" />
      <svg className="ml-[106px] mt-[30px] h-[48px] w-[50px]" viewBox="0 0 50 48" fill="none" stroke="#999" strokeWidth="4">
        <path d="M16 3h18q2 0 3 2l10 17q1 2 0 4L37 43q-1 2-3 2H16q-2 0-3-2L3 26q-1-2 0-4L13 5q1-2 3-2z" />
        <circle cx="25" cy="24" r="7.500" />
      </svg>
    </nav>
  );
}

function MaLegend() {
  return (
    <div className="flex h-[103px] whitespace-nowrap">
      <div className="ml-[20px] mt-[24px] flex h-[56px] w-[125px] items-center rounded-[7px] bg-[#f1f1f1] text-[36px] leading-none text-[#333]">
        <span className="ml-[11px] mt-[2px] w-[84px]">均线</span>
        <Down className="h-[13px] w-[17px] text-[#666]" />
      </div>
      <div className="ml-[14px] mt-[10px] w-[762px] text-[38px] leading-[46px] font-medium tracking-[-0.1px]">
        <div className="flex">
          <span className="ml-[1px] w-[99px] text-[36px] font-normal text-[#333]">日线</span>
          <span className="w-[169px] text-[#111]">M5:28.80</span>
          <span className="w-[188px] text-[#dfa021]">M10:28.78</span>
          <span className="text-[#e86375]">M20:28.39</span>
        </div>
        <div className="flex">
          <span className="w-[206px] text-[#6cc04a]">M250:28.96</span>
          <span className="w-[189px] text-[#3a78a8]">M30:28.90</span>
          <span className="text-[#4f154f]">M225:30.40</span>
        </div>
      </div>
      <span className="mt-[19px] w-[145px] text-[39px] leading-[58px] text-[#444]">前复权</span>
      <span className="mt-[14px] h-[60px] w-[120px] rounded-[7px] border border-[#555] text-center text-[38px] leading-[60px] text-[#222]">筹码</span>
    </div>
  );
}

function VolumePanel() {
  return (
    <section>
      <div className="mx-[13px] flex h-[76px] border-x-2 border-t-2 border-[#ebebeb] whitespace-nowrap text-[39px] leading-[76px] font-medium tracking-[0.7px]">
        <div className="ml-[10px] mt-[10px] flex h-[54px] w-[177px] items-center rounded-[6px] bg-[#f1f1f1] leading-none font-normal tracking-normal text-[#333]">
          <span className="ml-[14px] mt-px w-[130px]">成交额</span>
          <Down className="h-[13px] w-[17px] text-[#666]" />
        </div>
        <span className="ml-[14px] w-[221px] text-[#33641b]">额:7246.2万</span>
        <span className="w-[194px] text-[#111]">M5:1.20亿</span>
        <span className="w-[216px] text-[#dfa021]">M10:1.16亿</span>
        <span className="w-[131px] font-normal tracking-[0.3px] text-[#333]">换手率:</span>
        <span className="tracking-[1.2px] text-[#46a9e4]">1.27%</span>
      </div>
      <VolumeChart />
    </section>
  );
}

function MacdPanel() {
  return (
    <section className="mt-[11px]">
      <div className="mx-[13px] h-[98px] border-x-2 border-t-2 border-[#ebebeb] whitespace-nowrap font-medium">
        <div className="flex h-[66px] text-[39px] leading-[76px]">
          <div className="ml-[10px] mt-[10px] flex h-[54px] w-[330px] items-center rounded-[6px] bg-[#f1f1f1] leading-none text-[#333]">
            <span className="ml-[13px] w-[284px] tracking-[2.2px]"><Wide>MACD</Wide>(12,26,9)</span>
            <Down className="h-[13px] w-[17px] text-[#666]" />
          </div>
          <span className="mt-[18px] ml-[10px] h-[39px] w-[39px] rounded-full border-[3px] border-[#c8c8c8] text-center text-[28px] leading-[34px] font-normal text-[#c0c0c0]">?</span>
          <span className="ml-[17px] w-[241px] tracking-[1.4px] text-[#dc3434]"><Wide>MACD</Wide>:+0.38</span>
          <span className="w-[273px] tracking-[1.6px] text-[#333]"><Wide>DIFF</Wide>:−0.47</span>
          <span className="tracking-[0.5px] font-normal text-[#4a90e0]">查看暗盘资金</span>
        </div>
        <div className="ml-[11px] h-[30px] text-[39px] leading-[33px] tracking-[1.9px] text-[#ef7a48]"><Wide>DEA</Wide>:−0.66</div>
      </div>
      <div className="relative"><MacdChart /></div>
      <div className="mt-[6px] h-[13px] bg-[#f4f4f4]" />
    </section>
  );
}

function BottomTabs() {
  return (
    <section className="h-[173px] overflow-hidden bg-white">
      <div className="flex h-[134px] border-b-2 border-[#c8c8c8] whitespace-nowrap text-[48px] leading-[136px] text-[#666]">
        <svg className="mt-[46px] h-[46px] w-[34px]" viewBox="0 0 34 46">
          <path d="M0 1h24q2 0 3 2l6 14q0 2-1 3L13 39q-2 2-4 0L0 29z" fill="#d3a96f" />
          <rect x="3" y="9" width="17" height="4" fill="#fff" />
        </svg>
        <span className="ml-[36px] w-[298px] text-[64px] leading-[134px] font-bold italic tracking-[0.8px] text-[#808080] font-['Roboto']">Level−2</span>
        <span className="w-[174px]">看点</span>
        <span className="w-[174px]">资讯</span>
        <span className="w-[174px]">盘口</span>
        <span className="w-[167px]">资金</span>
        <div className="h-[134px] w-[112px] text-[54px] font-medium text-[#2e2e2e] [mask-image:linear-gradient(90deg,#000_45%,rgba(0,0,0,.3))]">
          <div className="h-[120px]">社<span className="font-normal">区</span></div>
          <div className="ml-[23px] h-[13px] w-[66px] rounded-full bg-[#fb3a30]" />
        </div>
      </div>
      <div className="flex h-[39px] items-end">
        <div className="ml-[59px] h-[2px] w-[32px] bg-[#888]" />
        <div className="ml-[18px] h-[2px] w-[7px] bg-[#555]" />
        <div className="ml-[114px] h-[2px] w-[4px] bg-[#555]" />
        <div className="ml-[12px] h-[2px] w-[4px] bg-[#555]" />
        <div className="ml-[592px] h-[2px] w-[46px] bg-[#aaa]" />
        <svg className="ml-[92px] h-[6px] w-[152px]" viewBox="0 0 152 6" fill="none" stroke="#333" strokeWidth="3">
          <path d="M1 7q10-9 19 0M122 7q14-9 28 0" />
        </svg>
      </div>
    </section>
  );
}

const actions = [
  ['下单', 'M10 3h36q7 0 7 7v37L41 60H10q-7 0-7-7V10q0-7 7-7zM10 18h38M10 26h38M10 34h38M10 42h27'],
  ['诊股', 'M6 12h44q9 0 9 9v29q0 8-8 8H5q-8 0-8-8V21q0-9 9-9zM15 6h25M17 36h22M28 25v22M6 60.500h12M38 60.500h12'],
  ['删自选', 'M4 7h48v48H4zM15 31.500h27'],
  ['功能', 'M28 3.500a27.500 27.500 0 1 0 .1 0zM15 24h26M15 40h26'],
];

function ActionBar() {
  return (
    <footer className="h-[218px] bg-[#242424]">
      <div className="flex h-[188px] whitespace-nowrap text-center">
        <div className="flex w-[275px] flex-col items-center">
          <svg className="mt-[14px] h-[17px] w-[30px]" viewBox="0 0 30 17"><path d="M15 0l15 17H0z" fill="#b3b3b3" /></svg>
          <span className="mt-[20px] text-[35.500px] leading-[44px] text-[#8e8e98]">专用设备</span>
          <span className="mt-[20px] ml-[2px] text-[38px] leading-[44px] text-[#22e722] font-['Roboto'] tracking-[-0.4px]">-0.12%</span>
        </div>
        {actions.map(([label, d]) => (
          <div key={label} className="flex w-[231px] flex-col items-center">
            <svg className="mt-[26px] h-[64px] w-[56px] overflow-visible" viewBox="0 0 56 64">
              <path d={d} fill="none" stroke="#ddd" strokeWidth="3.200" />
            </svg>
            <span className="mt-[9px] text-[35px] leading-[44px] text-[#d8d8d8]">{label}</span>
          </div>
        ))}
      </div>
      <div className="mx-auto h-[12px] w-[420px] rounded-full bg-[#b3b3b3]" />
    </footer>
  );
}

export default function App() {
  return (
    <div className="h-[2670px] w-[1200px] overflow-hidden bg-white font-['Roboto_Condensed','Noto_Sans_CJK_SC',sans-serif]">
      <Header />
      <Summary />
      <PeriodTabs />
      <MaLegend />
      <PriceChart />
      <VolumePanel />
      <MacdPanel />
      <BottomTabs />
      <ActionBar />
    </div>
  );
}
